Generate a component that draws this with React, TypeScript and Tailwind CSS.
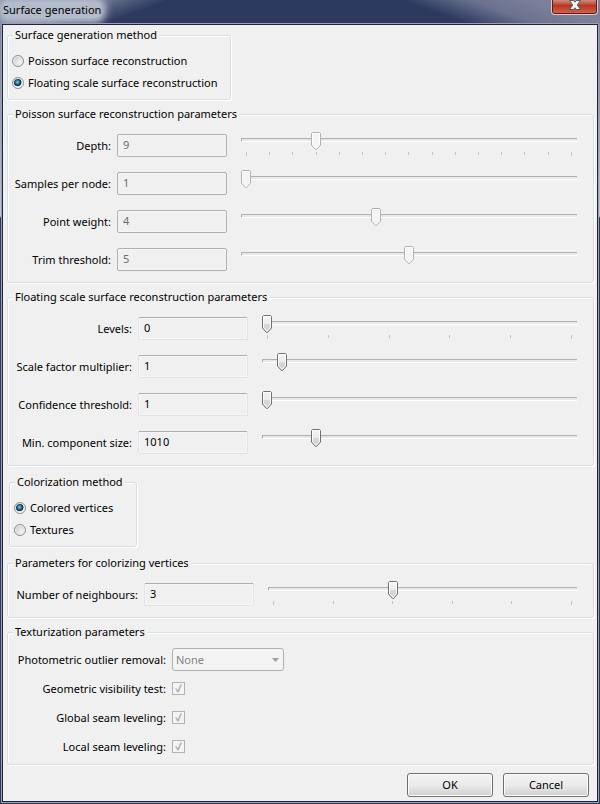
import { useId, useState, type ReactNode } from "react";

type SliderProps = {
  id: string;
  label: string;
  min: number;
  max: number;
  value: number;
  onChange: (v: number) => void;
  ticks?: number;
  disabled?: boolean;
};

function Thumb({ disabled }: { disabled?: boolean }) {
  return (
    <svg viewBox="0 0 11 19" className="block h-[19px] w-[11px]" aria-hidden="true">
      <defs>
        <linearGradient id="thumb-fill" x1="0" y1="0" x2="0" y2="1">
          <stop offset="0" stopColor="#f4f4f4" />
          <stop offset="0.5" stopColor="#ebebeb" />
          <stop offset="0.51" stopColor="#d9d9d9" />
          <stop offset="1" stopColor="#cfcfcf" />
        </linearGradient>
      </defs>
      <path
        d="M1.5 .5H8.5L9.5 1.5V13L5.5 17.5L4.5 17.5L.5 13V1.5Z"
        fill={disabled ? "#f4f4f4" : "url(#thumb-fill)"}
        stroke={disabled ? "#adb2b5" : "#707070"}
      />
      <path d="M1.5 1.5H8.5V12.5L5 16.3L1.5 12.5Z" fill="none" stroke="#fcfcfc" />
    </svg>
  );
}

function Slider({ id, label, min, max, value, onChange, ticks, disabled }: SliderProps) {
  const pct = ((value - min) / (max - min)) * 100;
  return (
    <div className="relative self-stretch">
      <div className="pt-[6px]">
        <div className="h-1 border-t border-b border-l border-t-[#b0b0b0] border-b-white border-l-[#b0b0b0] bg-[#e7eaea]" />
      </div>
      {ticks && (
        <div className="mx-[5px] mt-[10px] flex justify-between" aria-hidden="true">
          {Array.from({ length: ticks }, (_, i) => (
            <span
              key={i}
              className={
                i === 0 || i === ticks - 1 ? "h-1 w-px bg-[#c4c4c4]" : "h-[3px] w-px bg-[#c4c4c4]"
              }
            />
          ))}
        </div>
      )}
      <input
        id={id}
        type="range"
        aria-label={label}
        min={min}
        max={max}
        step="any"
        value={value}
        disabled={disabled}
        onChange={(e) => onChange(Math.round(Number(e.target.value)))}
        className="absolute inset-x-0 top-0 h-[18px] w-full opacity-0"
      />
      <div className="pointer-events-none absolute inset-x-[5px] top-0">
        <div className="absolute top-0 -ml-[5px]" style={{ left: `${pct}%` }}>
          <Thumb disabled={disabled} />
        </div>
      </div>
    </div>
  );
}

type Param = { label: string; min: number; max: number; initial: number; ticks?: number };

function ParamRow({ param, disabled }: { param: Param; disabled?: boolean }) {
  const id = useId();
  const [value, setValue] = useState(param.initial);
  return (
    <>
      <label htmlFor={id} className="pt-px text-right whitespace-nowrap">
        {param.label}
      </label>
      <input
        id={id}
        type="text"
        readOnly
        disabled={disabled}
        value={value}
        className="mr-2 h-[23px] w-[110px] rounded-xs border border-[#e2e3ea] border-t-[#abadb3] bg-[#f0f0f0] px-[5px] pb-[2px] text-black shadow-[inset_0_0_0_1px_#f6f6f6] outline-none disabled:border-[#afafaf] disabled:text-[#6d6d6d]"
      />
      <Slider
        id={`${id}-slider`}
        label={param.label}
        min={param.min}
        max={param.max}
        value={value}
        onChange={setValue}
        ticks={param.ticks}
        disabled={disabled}
      />
    </>
  );
}

function Group({
  title,
  className,
  bodyClassName,
  children,
}: {
  title: string;
  className: string;
  bodyClassName: string;
  children: ReactNode;
}) {
  return (
    <fieldset
      className={`min-w-0 rounded-[3px] border border-[#d5dfe5] shadow-[inset_1px_1px_0_#fff,1px_1px_0_#fff] ${className}`}
    >
      <legend className="ml-[5px] bg-[#f0f0f0] px-[2px] whitespace-nowrap">{title}</legend>
      <div className={bodyClassName}>{children}</div>
    </fieldset>
  );
}

function Radio({
  name,
  label,
  checked,
  onSelect,
}: {
  name: string;
  label: string;
  checked: boolean;
  onSelect: () => void;
}) {
  return (
    <label className="flex h-[22px] items-center gap-1 whitespace-nowrap">
      <input
        type="radio"
        name={name}
        checked={checked}
        onChange={onSelect}
        className="size-3 shrink-0 appearance-none rounded-full border border-[#8e8f8f] bg-[radial-gradient(circle_at_65%_65%,#f4f4f4,#cfd2d5_70%)] shadow-[inset_0_0_0_1px_#f4f4f4] checked:bg-[radial-gradient(circle_at_45%_42%,#7cd3f4_0,#2589b8_20%,#0c3a5c_38%,#15324a_46%,#e8eaec_54%,#f4f4f4_60%)]"
      />
      {label}
    </label>
  );
}

function CheckRow({ label }: { label: string }) {
  const id = useId();
  return (
    <>
      <label htmlFor={id} className="text-right whitespace-nowrap">
        {label}
      </label>
      <span className="relative size-[13px]">
        <input
          id={id}
          type="checkbox"
          defaultChecked
          disabled
          className="block size-[13px] appearance-none border border-[#b1b1b1] bg-[#f4f4f4]"
        />
        <svg viewBox="0 0 13 13" className="pointer-events-none absolute inset-0 size-[13px]" aria-hidden="true">
          <path d="M3 6.5L4.8 6.2L5.8 8.2L8.4 2.2L10 2.4L6.8 10.6H5.2Z" fill="#b8b8b8" />
        </svg>
      </span>
    </>
  );
}

const poisson: Param[] = [
  { label: "Depth:", min: 6, max: 20, initial: 9, ticks: 15 },
  { label: "Samples per node:", min: 1, max: 20, initial: 1 },
  { label: "Point weight:", min: 0, max: 10, initial: 4 },
  { label: "Trim threshold:", min: 0, max: 10, initial: 5 },
];

const floating: Param[] = [
  { label: "Levels:", min: 0, max: 5, initial: 0, ticks: 6 },
  { label: "Scale factor multiplier:", min: 0, max: 20, initial: 1 },
  { label: "Confidence threshold:", min: 1, max: 20, initial: 1 },
  { label: "Min. component size:", min: 0, max: 6300, initial: 1010 },
];

const paramBody = "pt-[10px] pr-4 pb-[9px] pl-[6px]";
const radioBody = "px-1 pt-[7px] pb-[5px]";

const buttonClass =
  "h-6 w-[86px] rounded-[3px] border border-[#707070] bg-linear-to-b from-[#f2f2f2] from-0% via-[#ebebeb] via-50% to-[#cfcfcf] to-100% shadow-[inset_0_0_0_1px_#fcfcfc]";

export default function App() {
  const [method, setMethod] = useState("floating");
  const [color, setColor] = useState("vertices");

  return (
    <div className="flex min-h-screen flex-col bg-[linear-gradient(#7b809b_0,#9297ad_100px,#c4c8d4_216px,#2d3a5f_218px)] px-[2px] pb-[2px] font-['Noto_Sans','Open_Sans',sans-serif] text-[11px] leading-4 text-black">
      <header className="-mx-[2px] flex h-6 items-start justify-between overflow-hidden bg-[linear-gradient(160deg,#7f86a0_0,#7b839e_30px,transparent_58px),linear-gradient(20deg,#2d3a5f_160px,#6b7390_184px,#7b809b_205px)] pr-[2px] pl-[3px]">
        <h1 className="mt-[2px] rounded-md bg-[#b4bccb] shadow-[0_0_7px_5px_#b4bccb]">Surface generation</h1>
        <button
          type="button"
          aria-label="Close"
          className="flex h-[15px] w-[47px] justify-center rounded-b-[4px] border border-t-0 border-[#e0c8cc] bg-linear-to-b from-[#cf8a80] from-0% via-[#b8341f] via-40% to-[#d4694a] to-100% shadow-[inset_0_-1px_0_#5c1a1a,inset_1px_0_0_#5c1a1a,inset_-1px_0_0_#5c1a1a]"
        >
          <svg viewBox="0 0 12 11" className="h-[11px] w-3" aria-hidden="true">
            <path d="M.5 .5H4.5L6 2.2L7.5 .5H11.5L8.3 5L11.5 9.5H7.5L6 7.8L4.5 9.5H.5L3.7 5Z" fill="#f4f4f4" stroke="#535666" />
          </svg>
        </button>
      </header>

      <main className="flex grow flex-col border border-[#1f2638] bg-[#f0f0f0] pt-[2px] pr-[3px] pb-[3px] pl-1 shadow-[0_0_0_1px_#9aa0b4]">
        <Group title="Surface generation method" className="w-[224px]" bodyClassName={radioBody}>
          <Radio name="method" label="Poisson surface reconstruction" checked={method === "poisson"} onSelect={() => setMethod("poisson")} />
          <Radio name="method" label="Floating scale surface reconstruction" checked={method === "floating"} onSelect={() => setMethod("floating")} />
        </Group>

        <Group title="Poisson surface reconstruction parameters" className="mt-[6px]" bodyClassName={paramBody}>
          <div className="grid auto-rows-[27px] grid-cols-[97px_auto_1fr] items-center gap-x-[6px] gap-y-[11px]">
            {poisson.map((p) => (
              <ParamRow key={p.label} param={p} disabled />
            ))}
          </div>
        </Group>

        <Group title="Floating scale surface reconstruction parameters" className="mt-[6px]" bodyClassName={paramBody}>
          <div className="grid auto-rows-[27px] grid-cols-[118px_auto_1fr] items-center gap-x-[6px] gap-y-[11px]">
            {floating.map((p) => (
              <ParamRow key={p.label} param={p} />
            ))}
          </div>
        </Group>

        <Group title="Colorization method" className="mx-[2px] my-2 w-[128px]" bodyClassName={radioBody}>
          <Radio name="color" label="Colored vertices" checked={color === "vertices"} onSelect={() => setColor("vertices")} />
          <Radio name="color" label="Textures" checked={color === "textures"} onSelect={() => setColor("textures")} />
        </Group>

        <Group title="Parameters for colorizing vertices" className="" bodyClassName={paramBody}>
          <div className="grid auto-rows-[27px] grid-cols-[124px_auto_1fr] items-center gap-x-[6px]">
            <ParamRow param={{ label: "Number of neighbours:", min: 1, max: 6, initial: 3, ticks: 6 }} />
          </div>
        </Group>

        <Group title="Texturization parameters" className="mt-[6px]" bodyClassName="pt-[5px] pr-4 pb-[3px] pl-[6px]">
          <div className="grid auto-rows-[29px] grid-cols-[152px_1fr] items-center gap-x-[6px]">
            <label htmlFor="outlier" className="text-right whitespace-nowrap">
              Photometric outlier removal:
            </label>
            <span className="relative w-[112px]">
              <select
                id="outlier"
                disabled
                className="block h-[23px] w-full appearance-none rounded-[3px] border border-[#adb2b5] bg-[#f4f4f4] px-[3px] text-[#838383] opacity-100"
              >
                <option>None</option>
              </select>
              <svg viewBox="0 0 7 4" className="pointer-events-none absolute top-[10px] right-[5px] h-1 w-[7px]" aria-hidden="true">
                <path d="M0 0H7L3.5 4Z" fill="#a0a0a0" />
              </svg>
            </span>
            <CheckRow label="Geometric visibility test:" />
            <CheckRow label="Global seam leveling:" />
            <CheckRow label="Local seam leveling:" />
          </div>
        </Group>

        <footer className="mt-2 flex justify-end gap-[10px] pr-[5px]">
          <button type="button" className={buttonClass}>
            OK
          </button>
          <button type="button" className={buttonClass}>
            Cancel
          </button>
        </footer>
      </main>
    </div>
  );
}
